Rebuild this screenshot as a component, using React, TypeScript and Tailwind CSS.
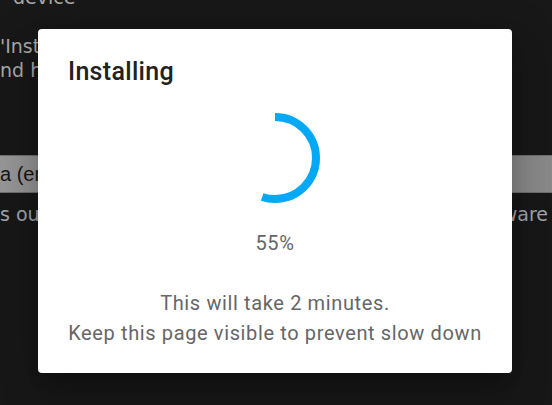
import React from "react";

function Spinner({ value }: { value: number }) {
  const r = 41;
  const c = 2 * Math.PI * r;
  const offset = ((100 - value) / 100) * c;
  return (
    <svg width="90" height="90" viewBox="0 0 90 90" className="block">
      <circle
        cx="45"
        cy="45"
        r={r}
        fill="none"
        stroke="#03a9f4"
        strokeWidth="8"
        strokeDasharray={c}
        strokeDashoffset={offset}
        transform="rotate(-90 45 45)"
      />
    </svg>
  );
}

export default function App() {
  return (
    <div className="relative w-[552px] h-[405px] overflow-hidden bg-[#181818]">
      {/* background page (behind scrim) */}
      <div
        className="flex flex-col text-[19px] leading-[24px] text-[#a9a9a9]"
        style={{ fontFamily: '"DejaVu Sans", sans-serif' }}
      >
        <div className="-mt-[15px] pl-[13px] whitespace-nowrap">device</div>
        <div className="mt-[25px] whitespace-nowrap">'Inst</div>
        <div className="whitespace-nowrap">nd h</div>
        <div
          className="mt-[73px] h-[38px] border-y border-[#6f6f6f] bg-gradient-to-r from-[#979797] to-[#8a8a8a] flex items-center text-[#161616] text-[20px] whitespace-nowrap"
          style={{ fontFamily: '"Liberation Sans", sans-serif' }}
        >
          a (en
        </div>
        <div className="mt-[9px] flex justify-between whitespace-nowrap text-[#a3a6aa]">
          <span>s ou</span>
          <span className="pr-[4px]">ware</span>
        </div>
      </div>

      {/* dialog */}
      <div
        className="absolute left-[38px] top-[29px] w-[474px] h-[344px] bg-white rounded-[4px] shadow-[0_11px_15px_-7px_rgba(0,0,0,0.2),0_24px_38px_3px_rgba(0,0,0,0.14),0_9px_46px_8px_rgba(0,0,0,0.12)] flex flex-col"
        style={{ fontFamily: 'Roboto, sans-serif' }}
      >
        <div className="pt-[23px] pl-[30px] text-[25px] leading-[40px] font-medium tracking-[0.31px] text-[#212121]">
          Installing
        </div>
        <div className="mt-[21px] flex justify-center">
          <Spinner value={55} />
        </div>
        <div className="mt-[25px] text-center text-[20px] leading-[30px] tracking-[0.625px] text-[#666666]">
          55%
        </div>
        <div className="mt-[30px] text-center text-[20px] leading-[30px] tracking-[0.625px] text-[#666666]">
          <div>This will take 2 minutes.</div>
          <div>Keep this page visible to prevent slow down</div>
        </div>
      </div>
    </div>
  );
}
